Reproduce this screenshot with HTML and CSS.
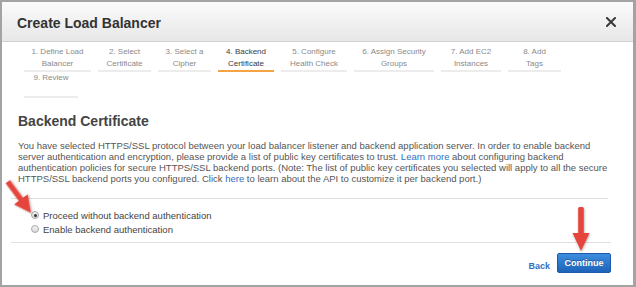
FILE: index.html
```html
<!DOCTYPE html>
<html>
<head>
<meta charset="utf-8">
<link rel="stylesheet" href="styles.css">
</head>
<body>
<div class="modal">
  <div class="header">
    <h1 class="title">Create Load Balancer</h1>
    <svg class="close" width="10" height="10" viewBox="0 0 10 10"><path d="M1 1 L9 9 M9 1 L1 9" stroke="#3a3a3a" stroke-width="2" stroke-linecap="square"/></svg>
  </div>
  <div class="steps">
    <div class="step s1">1. Define Load<br>Balancer</div>
    <div class="step s2">2. Select<br>Certificate</div>
    <div class="step s3">3. Select a<br>Cipher</div>
    <div class="step s4 active">4. Backend<br>Certificate</div>
    <div class="step s5">5. Configure<br>Health Check</div>
    <div class="step s6">6. Assign Security<br>Groups</div>
    <div class="step s7">7. Add EC2<br>Instances</div>
    <div class="step s8">8. Add<br>Tags</div>
    <div class="step s9">9. Review</div>
  </div>
  <div class="content">
    <h2 class="heading">Backend Certificate</h2>
    <p class="desc">You have selected HTTPS/SSL protocol between your load balancer listener and backend application server. In order to enable backend<br>server authentication and encryption, please provide a list of public key certificates to trust. <a href="#">Learn more</a> about configuring backend<br>authentication policies for secure HTTPS/SSL backend ports. (Note: The list of public key certificates you selected will apply to all the secure<br>HTTPS/SSL backend ports you configured. Click <a href="#">here</a> to learn about the API to customize it per backend port.)</p>
    <div class="sep sep1"></div>
    <div class="options">
      <label class="option"><span class="radio checked"></span>Proceed without backend authentication</label>
      <label class="option"><span class="radio"></span>Enable backend authentication</label>
    </div>
    <div class="sep"></div>
    <div class="footer">
      <a href="#" class="back">Back</a>
      <button class="continue">Continue</button>
    </div>
  </div>
  <svg class="arrows" width="636" height="287" viewBox="0 0 636 287">
    <defs>
      <filter id="sh" x="-50%" y="-50%" width="200%" height="200%">
        <feDropShadow dx="0.5" dy="1" stdDeviation="0.8" flood-color="#000" flood-opacity="0.35"/>
      </filter>
    </defs>
    <g transform="translate(31 213) rotate(-36.6)" filter="url(#sh)" fill="#e5443d">
      <rect x="-2.6" y="-39" width="5.2" height="24"/>
      <polygon points="-8.5,-17 8.5,-17 0,0"/>
    </g>
    <g transform="translate(581 251)" filter="url(#sh)" fill="#e5443d">
      <rect x="-2.8" y="-44" width="5.6" height="28" rx="1.5"/>
      <polygon points="-8.5,-18 8.5,-18 0,0"/>
    </g>
  </svg>
</div>
</body>
</html>
```

FILE: styles.css
```css
* { box-sizing: border-box; }
html, body { margin: 0; padding: 0; background: #fff; }
body { font-family: "Liberation Sans", Arial, sans-serif; }

.modal {
  position: relative;
  width: 636px;
  height: 287px;
  border: 2px solid #a3a3a3;
  border-right-width: 3px;
  background: #fff;
  overflow: hidden;
}

.header {
  height: 40px;
  border-bottom: 1px solid #d2d2d2;
  background: linear-gradient(#fbfbfb, #e7e7e7);
  display: flex;
  align-items: center;
  justify-content: space-between;
  padding: 3px 15px 0 15px;
}
.title {
  margin: 0;
  font-size: 14px;
  font-weight: bold;
  color: #333;
}
.close { margin-bottom: 3px; margin-right: 2px; }

.steps {
  margin-top: 4px;
  padding-left: 22px;
  width: 580px;
  display: flex;
  flex-wrap: wrap;
  column-gap: 7px;
}
.step {
  height: 26px;
  border-bottom: 2px solid #ececec;
  font-size: 8px;
  line-height: 12px;
  color: #8a8a8a;
  text-align: center;
}
.step.active { color: #3a3a3a; border-bottom-color: #f5a445; }
.s1 { width: 67px; }
.s2 { width: 53px; }
.s3 { width: 53px; }
.s4 { width: 56px; }
.s5 { width: 66px; }
.s6 { width: 80px; }
.s7 { width: 60px; }
.s8 { width: 53px; }
.s9 { width: 54px; }

.content {
  margin: 0 22px 0 9px;
}
.heading {
  margin: 15px 0 0 7px;
  font-size: 14px;
  line-height: 17px;
  font-weight: bold;
  color: #444;
}
.desc {
  margin: 10px 0 0 7px;
  font-size: 9.5px;
  line-height: 11px;
  color: #555;
  white-space: nowrap;
}
.desc a { color: #2f72c1; text-decoration: none; }

.sep {
  height: 1px;
  background: #e0e0e0;
  margin-top: 6px;
}
.sep1 { margin-top: 14px; margin-right: 3px; }

.options {
  margin-top: 9px;
  padding-left: 20px;
  display: flex;
  flex-direction: column;
}
.option {
  display: flex;
  align-items: center;
  height: 14px;
  font-size: 9.5px;
  color: #444;
}
.radio {
  width: 8px;
  height: 8px;
  border-radius: 50%;
  border: 1px solid #a8a8a8;
  background: linear-gradient(#f4f4f4, #d8d8d8);
  margin-right: 4px;
  display: flex;
  align-items: center;
  justify-content: center;
}
.radio.checked::after {
  content: "";
  width: 3px;
  height: 3px;
  border-radius: 50%;
  background: #333;
}

.footer {
  margin-top: 10px;
  display: flex;
  justify-content: flex-end;
  align-items: center;
  gap: 7px;
}
.back {
  font-size: 9px;
  font-weight: bold;
  color: #2f72c1;
  text-decoration: none;
  padding-top: 5px;
}
.continue {
  width: 54px;
  height: 20px;
  padding: 0;
  border: 1px solid #1c5aa8;
  border-radius: 2px;
  background: linear-gradient(#3c8de0, #1c63b9);
  color: #fff;
  font-family: "Liberation Sans", Arial, sans-serif;
  font-size: 9px;
  font-weight: bold;
  text-shadow: 0 -1px 0 rgba(0,0,0,0.3);
}

.arrows {
  position: absolute;
  left: -2px;
  top: -2px;
  pointer-events: none;
}
```
